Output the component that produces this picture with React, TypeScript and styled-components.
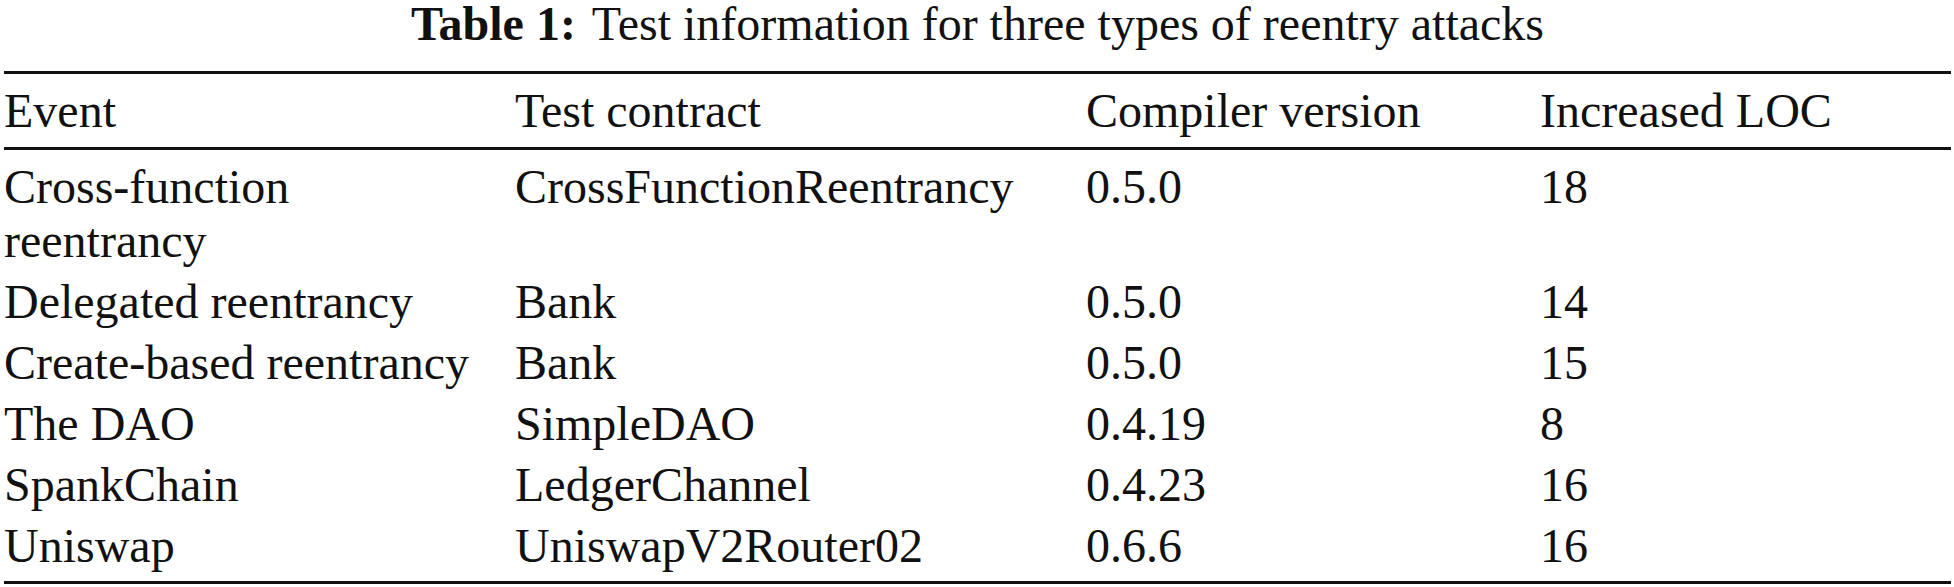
import React from 'react';
import styled, { createGlobalStyle } from 'styled-components';

type Entry = {
  event: string;
  contract: string;
  compiler: string;
  loc: string;
};

const GlobalStyle = createGlobalStyle`
  html, body {
    margin: 0;
    padding: 0;
    background: #ffffff;
  }
  body {
    font-family: "Liberation Serif", "Times New Roman", serif;
    color: #111111;
  }
`;

const Page = styled.div`
  width: 1947px;
  margin-left: 4px;
  font-size: 48px;
`;

const Caption = styled.div`
  text-align: center;
  line-height: 48px;
  white-space: nowrap;
`;

const CaptionLabel = styled.span`
  font-weight: bold;
  margin-right: 0.33em;
`;

const Head = styled.div`
  margin-top: 23px;
  border-top: 3px solid #111111;
  border-bottom: 3px solid #111111;
  padding: 10px 0 9px;
`;

const Body = styled.div`
  border-bottom: 3px solid #111111;
  padding: 7px 0 4px;
`;

const Row = styled.div<{ header?: boolean }>`
  display: grid;
  grid-template-columns: 511px 571px 454px 1fr;
  padding: ${({ header }) => (header ? '0' : '3px 0 4px')};
`;

const Cell = styled.div<{ wide?: boolean }>`
  line-height: 54px;
  padding-right: ${({ wide }) => (wide ? '4px' : '24px')};
`;

const entries: Entry[] = [
  {
    event: 'Cross-function reentrancy',
    contract: 'CrossFunctionReentrancy',
    compiler: '0.5.0',
    loc: '18'
  },
  { event: 'Delegated reentrancy', contract: 'Bank', compiler: '0.5.0', loc: '14' },
  { event: 'Create-based reentrancy', contract: 'Bank', compiler: '0.5.0', loc: '15' },
  { event: 'The DAO', contract: 'SimpleDAO', compiler: '0.4.19', loc: '8' },
  { event: 'SpankChain', contract: 'LedgerChannel', compiler: '0.4.23', loc: '16' },
  { event: 'Uniswap', contract: 'UniswapV2Router02', compiler: '0.6.6', loc: '16' }
];

const App: React.FC = () => {
  return (
    <Page>
      <GlobalStyle />
      <Caption>
        <CaptionLabel>Table 1:</CaptionLabel>
        Test information for three types of reentry attacks
      </Caption>
      <Head>
        <Row header>
          <Cell>Event</Cell>
          <Cell wide>Test contract</Cell>
          <Cell>Compiler version</Cell>
          <Cell>Increased LOC</Cell>
        </Row>
      </Head>
      <Body>
        {entries.map((entry) => (
          <Row key={entry.event}>
            <Cell>{entry.event}</Cell>
            <Cell wide>{entry.contract}</Cell>
            <Cell>{entry.compiler}</Cell>
            <Cell>{entry.loc}</Cell>
          </Row>
        ))}
      </Body>
    </Page>
  );
};

export default App;
